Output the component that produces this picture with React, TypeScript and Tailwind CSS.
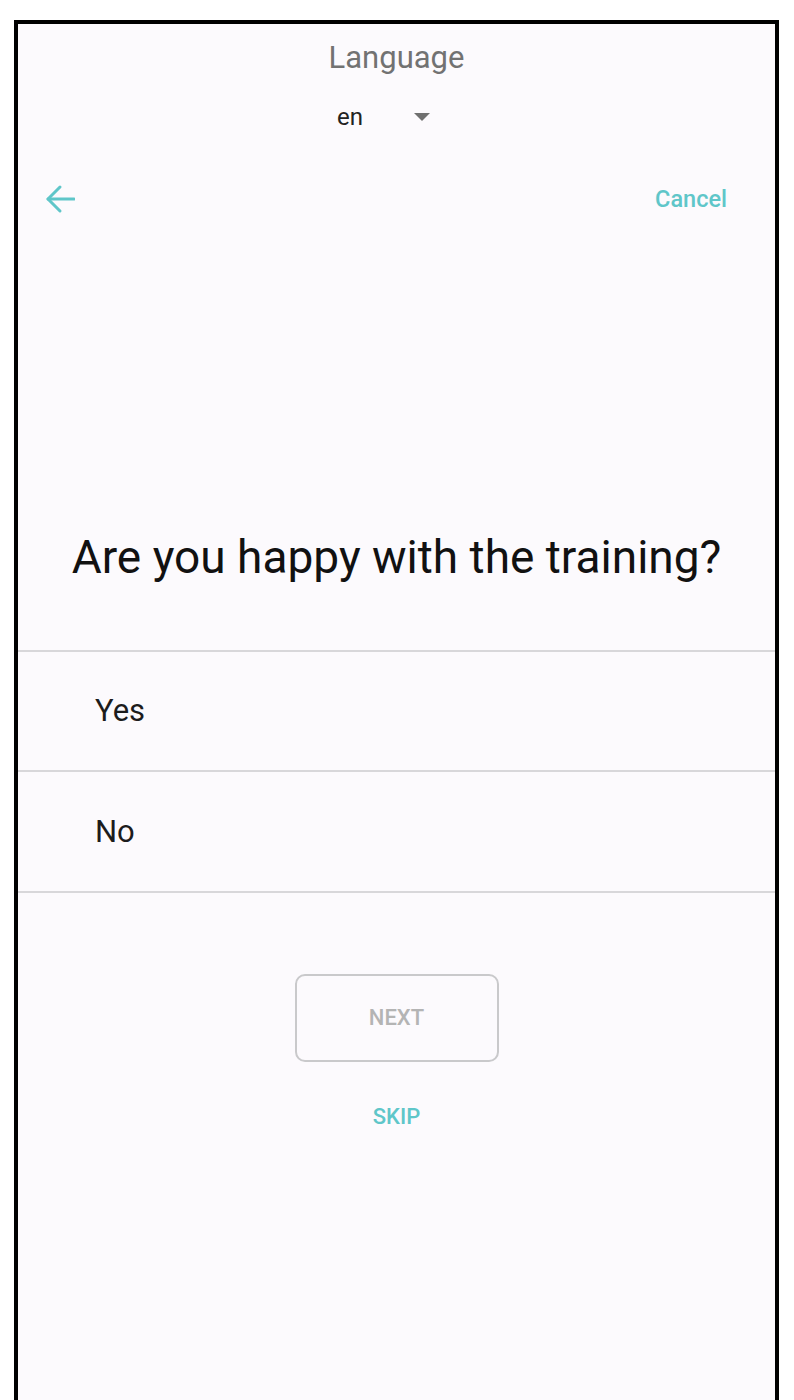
import React from 'react';

const TEAL = '#5fc6c9';

function BackArrow() {
  return (
    <svg width="30" height="30" viewBox="0 0 30 30" fill="none" aria-hidden>
      <path d="M3 15H29" stroke={TEAL} strokeWidth="3" strokeLinecap="round" />
      <path d="M15 3L3 15L15 27" stroke={TEAL} strokeWidth="3" strokeLinecap="round" strokeLinejoin="round" />
    </svg>
  );
}

function OptionRow({ label }: { label: string }) {
  return (
    <div className="flex h-[120px] items-center border-b-2 border-[#d8d7da] pl-[77px]">
      <span className="text-[31px] leading-[36px] text-[#1c1c1c]">{label}</span>
    </div>
  );
}

export default function App() {
  return (
    <div className="min-h-[1400px] w-full bg-white font-['Roboto','Liberation_Sans',sans-serif]">
      <div className="ml-[14px] mt-[20px] min-h-[1380px] w-[765px] border-x-4 border-t-4 border-black bg-[#fcfafd]">
        {/* language picker */}
        <div className="pt-[16px] text-center text-[31px] leading-[36px] text-[#727272]">Language</div>
        <div className="mt-[27px] flex justify-center">
          <div className="ml-[-18px] flex h-[28px] items-center pl-[16px] pr-[24px]">
            <span className="text-[24px] leading-[28px] text-[#222]">en</span>
            <svg className="ml-[51px]" width="16" height="8" viewBox="0 0 16 8" aria-hidden>
              <path d="M0 0H16L8 8Z" fill="#707070" />
            </svg>
          </div>
        </div>

        {/* nav */}
        <div className="mt-[53px] flex h-[30px] items-center justify-between pl-[27px] pr-[48px]">
          <BackArrow />
          <span className="text-[23.5px] font-medium leading-[28px]" style={{ color: TEAL }}>Cancel</span>
        </div>

        {/* question */}
        <div className="mt-[316px] text-center text-[46px] leading-[54px] text-[#111]">
          Are you happy with the training?
        </div>

        <div className="mt-[66px] border-t-2 border-[#d8d7da]">
          <OptionRow label="Yes" />
          <div className="flex h-[121px] items-center border-b-2 border-[#d8d7da] pl-[77px]">
            <span className="text-[31px] leading-[36px] text-[#1c1c1c]">No</span>
          </div>
        </div>

        <div className="mt-[81px] flex flex-col items-center">
          <button
            type="button"
            className="flex h-[88px] w-[204px] items-center justify-center rounded-[10px] border-2 border-[#c9c9cb] text-[22px] font-medium leading-[26px] text-[#b4b4b4]"
          >
            NEXT
          </button>
          <span className="mt-[42px] text-[22px] font-medium leading-[26px]" style={{ color: TEAL }}>SKIP</span>
        </div>
      </div>
    </div>
  );
}
